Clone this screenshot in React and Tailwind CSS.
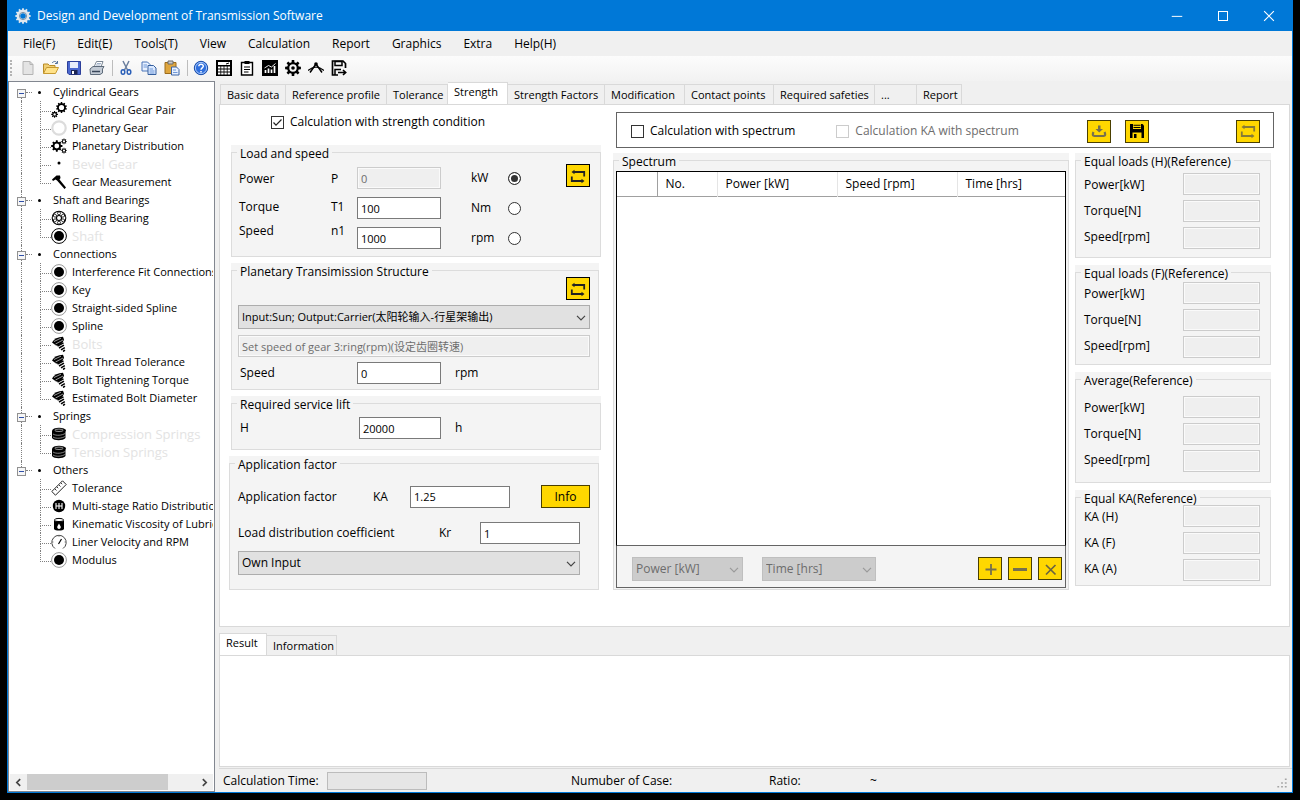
import React from "react";

/* ---------- drawing helpers ---------- */

function gearPath(cx, cy, outer, inner, hole, teeth) {
  const step = (Math.PI * 2) / teeth;
  const at = (r, a) => `${(cx + r * Math.cos(a)).toFixed(2)} ${(cy + r * Math.sin(a)).toFixed(2)}`;
  const pts = [];
  for (let i = 0; i < teeth; i++) {
    const a = i * step - Math.PI / 2;
    pts.push(at(inner, a - step * 0.3), at(outer, a - step * 0.2), at(outer, a + step * 0.2), at(inner, a + step * 0.3));
  }
  return `M${pts.join("L")}ZM${cx + hole} ${cy}A${hole} ${hole} 0 1 0 ${cx - hole} ${cy}A${hole} ${hole} 0 1 0 ${cx + hole} ${cy}Z`;
}

function Svg({ children, className = "size-4" }) {
  return (
    <svg viewBox="0 0 16 16" className={`${className} shrink-0`} fill="none" aria-hidden="true">
      {children}
    </svg>
  );
}

function Gear({ g, fill = "#000" }) {
  return <path d={gearPath(...g)} fill={fill} fillRule="evenodd" />;
}

const Disc = ({ ring = "#999" }) => (
  <Svg>
    <circle cx="8" cy="8" r="7.4" stroke={ring} strokeWidth="1" />
    <circle cx="8" cy="8" r="5" fill="#000" />
  </Svg>
);

const Bolt = () => (
  <Svg>
    <path d="M1 6.500C3 3 7 1 12 .8L13 3.500C12 7 9 9.500 5 9.500Z" fill="#000" />
    <path d="M3 5.500L10 2.200M4.500 8L12 4" stroke="#fff" strokeWidth=".6" />
    <path d="M6.500 10L12.500 6.800M8 12L13 9.200M10 13.800L13.800 11.600M12 15.500L14 14.200" stroke="#000" strokeWidth="1.500" />
  </Svg>
);

const Spring = () => (
  <Svg>
    <path d="M1 5V12C3 15 12 15 14.500 12V3.500Z" fill="#000" />
    <ellipse cx="8" cy="4.500" rx="6.800" ry="2.800" fill="#000" />
    <ellipse cx="8" cy="4.300" rx="4.200" ry="1.200" stroke="#bbb" strokeWidth=".8" />
    <path d="M2 8C5 10 11 9.500 14.500 7.300M2 11C5 13 11 12.500 14.500 10.200" stroke="#bbb" strokeWidth=".7" />
  </Svg>
);

const icons = {
  pair: (
    <Svg>
      <Gear g={[10.5, 5.5, 5.5, 4.4, 2.6, 10]} />
      <Gear g={[3.6, 12.4, 3.4, 2.4, 1.2, 8]} />
    </Svg>
  ),
  ring: (
    <Svg>
      <circle cx="8" cy="8" r="6.700" stroke="#dcdcdc" strokeWidth="2.200" />
    </Svg>
  ),
  planets: (
    <Svg>
      <Gear g={[5.8, 8, 5.7, 4.3, 2.4, 8]} />
      <Gear g={[13, 3.4, 2.9, 2, 1.1, 8]} />
      <Gear g={[13, 12.6, 2.9, 2, 1.1, 8]} />
    </Svg>
  ),
  dot: (
    <Svg>
      <circle cx="8" cy="7" r="1.500" fill="#000" />
    </Svg>
  ),
  caliper: (
    <Svg>
      <path d="M1 5.500L5.500 1.500L9 1.500L9.500 4L8.500 5.500L15 13.500L13.500 15L6 6.500L4.500 5.500L2 7Z" fill="#000" />
    </Svg>
  ),
  bearing: (
    <Svg>
      <circle cx="8" cy="8" r="6.800" stroke="#000" strokeWidth="1.100" />
      <circle cx="8" cy="8" r="2.500" stroke="#000" strokeWidth="1.100" />
      {[0, 60, 120, 180, 240, 300].map((a) => (
        <circle key={a} cx="8" cy="3.300" r="1.500" stroke="#000" strokeWidth=".8" transform={`rotate(${a} 8 8)`} />
      ))}
    </Svg>
  ),
  shaft: <Disc ring="#000" />,
  disc: <Disc />,
  bolt: <Bolt />,
  spring: <Spring />,
  ruler: (
    <Svg>
      <path d="M.8 11.500L11.500 .8L15.200 4.500L4.500 15.200Z" stroke="#222" strokeWidth="1" />
      <path d="M4 9L5.500 10.500M6 7L7.200 8.200M8 5L9.500 6.500M10 3L11.200 4.200" stroke="#222" strokeWidth=".9" />
    </Svg>
  ),
  ratio: (
    <Svg>
      <circle cx="8" cy="8" r="6.200" fill="#000" />
      <path d="M5 5V11M8 5V11M11 5V11M5 8H11" stroke="#fff" strokeWidth="1.100" />
    </Svg>
  ),
  oil: (
    <Svg>
      <path d="M3 4.500V13C4 15 12 15 13 13V4.500Z" fill="#000" />
      <ellipse cx="8" cy="4" rx="4.600" ry="1.600" fill="#fff" stroke="#000" strokeWidth="1" />
      <path d="M8 7.500L9.700 10.500A1.800 1.800 0 1 1 6.300 10.500Z" fill="#fff" />
    </Svg>
  ),
  gauge: (
    <Svg>
      <path d="M4 14.500A7.200 7.200 0 1 1 12 14.500" stroke="#444" strokeWidth="1" />
      <path d="M7.500 10L10.500 5" stroke="#000" strokeWidth="1.200" />
      <path d="M8 1V3M1 8H2.500M13.500 8H15" stroke="#777" strokeWidth=".8" />
    </Svg>
  ),
};

/* ---------- data ---------- */

const menus = ["File(F)", "Edit(E)", "Tools(T)", "View", "Calculation", "Report", "Graphics", "Extra", "Help(H)"];

const tree = [
  ["Cylindrical Gears", [
    ["Cylindrical Gear Pair", "pair"],
    ["Planetary Gear", "ring"],
    ["Planetary Distribution", "planets"],
    ["Bevel Gear", "dot", true],
    ["Gear Measurement", "caliper"],
  ]],
  ["Shaft and Bearings", [
    ["Rolling Bearing", "bearing"],
    ["Shaft", "shaft", true],
  ]],
  ["Connections", [
    ["Interference Fit Connections", "disc"],
    ["Key", "disc"],
    ["Straight-sided Spline", "disc"],
    ["Spline", "disc"],
    ["Bolts", "bolt", true],
    ["Bolt Thread Tolerance", "bolt"],
    ["Bolt Tightening Torque", "bolt"],
    ["Estimated Bolt Diameter", "bolt"],
  ]],
  ["Springs", [
    ["Compression Springs", "spring", true],
    ["Tension Springs", "spring", true],
  ]],
  ["Others", [
    ["Tolerance", "ruler"],
    ["Multi-stage Ratio Distribution", "ratio"],
    ["Kinematic Viscosity of Lubricants", "oil"],
    ["Liner Velocity and RPM", "gauge"],
    ["Modulus", "disc"],
  ]],
];

const tabs = [
  ["Basic data", "w-[66px]"],
  ["Reference profile", "w-[101px]"],
  ["Tolerance", "w-[61px]"],
  ["Strength", "w-[60px]"],
  ["Strength Factors", "w-[97px]"],
  ["Modification", "w-[80px]"],
  ["Contact points", "w-[89px]"],
  ["Required safeties", "w-[101px]"],
  ["...", "w-[42px]"],
  ["Report", "w-[45px]"],
];

/* ---------- toolbar ---------- */

const toolbar = [
  ["New", <Svg><path d="M3 1.500H10L13 4.500V14.500H3Z" fill="#e4e4e4" stroke="#b4b4b4" /><path d="M10 1.500V4.500H13" stroke="#b4b4b4" /></Svg>],
  ["Open", <Svg><path d="M.5 13.500V4H5L6.500 5.500H12V8" fill="#f0cf75" stroke="#b98c28" /><path d="M.5 13.500L3.500 7.500H15.500L12.500 13.500Z" fill="#ffe28a" stroke="#c79a32" /><path d="M9 3C11 .8 13 1 14 3M14.500 1V3.500H12" stroke="#53719c" /></Svg>],
  ["Save", <Svg><path d="M1.500 1.500H14.500V14.500H3L1.500 13Z" fill="#4b68cf" stroke="#2c3f9a" /><path d="M4 2H12V8H4Z" fill="#e9eefb" /><path d="M5 10H11.500V14.500H5Z" fill="#1b2452" /><path d="M6 11H8V14H6Z" fill="#fff" /></Svg>],
  ["Print", <Svg><path d="M5 7L7.500 1.500H14L12 7" fill="#fff" stroke="#7b8794" /><path d="M1 9L4 6.500H15L13.500 9V13L11 14.500H1.500Z" fill="#c3cbd5" stroke="#5e6b7a" /><path d="M3 11.500H11" stroke="#39465a" strokeWidth="1.500" /><path d="M8 3.500H12M7 5H11.500" stroke="#9fb0c8" /></Svg>],
  null,
  ["Cut", <Svg><path d="M5 1L9.500 10M11 1L6.500 10" stroke="#6b7f9e" strokeWidth="1.500" /><ellipse cx="5" cy="12" rx="1.800" ry="2.300" stroke="#2a5fb8" strokeWidth="1.500" /><ellipse cx="11" cy="12" rx="1.800" ry="2.300" stroke="#2a5fb8" strokeWidth="1.500" /></Svg>],
  ["Copy", <Svg><path d="M1 2H6.500L9 4.500V11H1Z" fill="#e8f1ff" stroke="#4a74b8" /><path d="M7 5.500H12.500L15 8V14.500H7Z" fill="#dbe9ff" stroke="#345f9f" /><path d="M2.500 5H6M2.500 7H6M8.500 9H12M8.500 11H13.500M8.500 13H13.500" stroke="#6f98d8" /></Svg>],
  ["Paste", <Svg><path d="M1 2.500H12V13.500H1Z" fill="#dfa63e" stroke="#9c6c1c" /><path d="M4 1H9V4H4Z" fill="#ccc" stroke="#6b6b6b" /><path d="M7.500 7H12.500L15 9.500V15H7.500Z" fill="#e7f0ff" stroke="#3c64a4" /><path d="M9 10H12M9 12.500H13.500" stroke="#6f98d8" /></Svg>],
  null,
  ["Help", <Svg><circle cx="8" cy="8" r="6.700" fill="#2f6fdd" stroke="#1b4ea8" /><circle cx="8" cy="8" r="5.600" stroke="#c5dcff" strokeWidth=".8" /><path d="M5.800 6.300C5.800 3.500 10.400 3.600 10.300 6.300C10.200 7.900 8 7.900 8 9.800M8 11V12.500" stroke="#fff" strokeWidth="1.500" /></Svg>],
  ["Calculator", <Svg><path d="M0 0H16V16H0Z" fill="#000" /><path d="M2 2H14V5H2Z" fill="#fff" /><path d="M10 4L13 3" stroke="#000" /><path d="M2 7.500H14M2 10.500H14M2 13.500H14" stroke="#fff" strokeWidth="1.800" strokeDasharray="2.400 .8" /></Svg>],
  ["Report", <Svg><path d="M2.500 2.500H13.500V15H2.500Z" fill="#fff" stroke="#000" strokeWidth="1.400" /><path d="M5.500 1H10.500V4H5.500Z" fill="#000" /><path d="M5 7H11M5 9.500H11M5 12H9.500" stroke="#000" strokeWidth="1.200" /></Svg>],
  ["Chart", <Svg><path d="M0 0H16V16H0Z" fill="#000" /><path d="M3.500 10V13M6.500 8.500V13M9.500 9.500V13M12.500 6V13" stroke="#fff" strokeWidth="1.700" /><path d="M2.500 8L6.500 5.500L9.500 7L13.500 3.500" stroke="#fff" strokeWidth=".9" /></Svg>],
  ["Settings", <Svg><Gear g={[8, 8, 8, 5.9, 3.7, 8]} /><circle cx="8" cy="8" r="1.800" fill="#000" /></Svg>],
  ["Measure", <Svg><path d="M8 4L2 12.500M8 4L14 12.500" stroke="#000" strokeWidth="1.500" /><path d="M0 10.500L4 8L8 7L12 8L16 10.500" stroke="#000" strokeWidth="1.100" /><circle cx="8" cy="4" r="1.800" fill="#000" /></Svg>],
  ["Export", <Svg><path d="M7 15H1.500V1H12L14.500 3.500V8" stroke="#000" strokeWidth="1.700" /><path d="M4 1.500H11V5.500H4Z" stroke="#000" strokeWidth="1.500" /><path d="M4 15V9.500H10" stroke="#000" strokeWidth="1.500" /><path d="M7 12.500H14.500M12 10L14.700 12.500L12 15" stroke="#000" strokeWidth="1.600" /></Svg>],
];

/* ---------- controls ---------- */

const textBox =
  "h-[22px] min-w-0 border border-[#7a7a7a] bg-white px-[3px] text-[11px] text-black outline-none disabled:border-[#cccccc] disabled:bg-[#efefef] disabled:text-[#6d6d6d] disabled:shadow-[inset_0_0_0_1px_#fafafa]";

function IconButton({ label, children, dim }) {
  return (
    <button
      type="button"
      aria-label={label}
      className={`flex h-[23px] w-6 shrink-0 items-center justify-center border bg-[#ffd700] ${dim ? "border-[#4a3f00]" : "border-black"}`}
    >
      {children}
    </button>
  );
}

const Swap = ({ color = "#222" }) => (
  <Svg>
    <path d="M3 4H14.200V8.500M1.800 8.500V13H13" stroke={color} strokeWidth="1.800" />
    <path d="M1.500 4L4.500 1.800V6.200ZM14.500 13L11.500 10.800V15.200Z" fill={color} />
  </Svg>
);

function Select({ label, value, className = "", size = "text-[12px]", disabled }) {
  return (
    <div className={`relative ${className}`}>
      <select
        aria-label={label}
        disabled={disabled}
        className={`h-6 w-full appearance-none border border-[#adadad] bg-[#e1e1e1] pr-5 pl-[3px] text-black outline-none disabled:border-[#bfbfbf] disabled:bg-[#cccccc] disabled:text-[#6d6d6d] disabled:opacity-100 ${size}`}
      >
        <option>{value}</option>
      </select>
      <svg viewBox="0 0 10 6" className="pointer-events-none absolute top-[10px] right-1 h-[6px] w-[10px]" fill="none" aria-hidden="true">
        <path d="M1 .8L5 4.800L9 .8" stroke={disabled ? "#9a9a9a" : "#444"} strokeWidth="1.200" />
      </svg>
    </div>
  );
}

function Check({ label, checked, disabled }) {
  return (
    <label className={`flex items-center gap-[6px] ${disabled ? "text-[#6d6d6d]" : ""}`}>
      <span className="relative flex">
        <input
          type="checkbox"
          defaultChecked={checked}
          disabled={disabled}
          className="size-[13px] appearance-none border border-[#333] bg-white disabled:border-[#cccccc]"
        />
        {checked && (
          <svg viewBox="0 0 13 13" className="pointer-events-none absolute inset-0 size-[13px]" fill="none" aria-hidden="true">
            <path d="M2.500 6.500L5 9.200L10.500 3.500" stroke="#222" strokeWidth="1.200" />
          </svg>
        )}
      </span>
      {label}
    </label>
  );
}

function Group({ title, className = "", children }) {
  return (
    <div className={`flex bg-[#f4f4f4] ${className}`}>
      <fieldset className="w-full min-w-0 border border-[#dcdcdc]">
        <legend className="ml-[5px] h-[14px] px-[3px] leading-[18px] whitespace-nowrap">{title}</legend>
        {children}
      </fieldset>
    </div>
  );
}

function ReadoutGroup({ title, fields, className, pad }) {
  const ids = fields.map((f) => `${title}-${f}`.replace(/[^a-zA-Z]+/g, "-"));
  return (
    <Group title={title} className={className}>
      <div className={`flex justify-between pr-[10px] pl-2 ${pad}`}>
        <div className="flex flex-col">
          {fields.map((f, i) => (
            <label key={f} htmlFor={ids[i]} className="h-[26px] leading-[24px]">
              {f}
            </label>
          ))}
        </div>
        <div className="flex flex-col gap-[5px]">
          {ids.map((id) => (
            <input key={id} id={id} disabled className={`${textBox} w-[77px]`} />
          ))}
        </div>
      </div>
    </Group>
  );
}

/* ---------- regions ---------- */

function TitleBar() {
  return (
    <header className="flex h-[31px] shrink-0 items-center bg-[#0078d7] pl-[7px] text-white">
      <Svg>
        <Gear g={[8, 8, 7.8, 6.4, 2.8, 12]} fill="#dfe7ee" />
        <circle cx="8" cy="8" r="3.600" stroke="#7d93a6" strokeWidth="1" />
      </Svg>
      <h1 className="ml-[6px] flex-1 text-[12px]">Design and Development of Transmission Software</h1>
      <button type="button" aria-label="Minimize" className="flex h-full w-[46px] items-center justify-center">
        <Svg className="h-3 w-3"><path d="M1 8.500H15" stroke="#fff" strokeWidth="1.300" /></Svg>
      </button>
      <button type="button" aria-label="Maximize" className="flex h-full w-[46px] items-center justify-center">
        <span className="size-[10px] border border-white" />
      </button>
      <button type="button" aria-label="Close" className="flex h-full w-[46px] items-center justify-center">
        <Svg className="h-3 w-3"><path d="M1.500 1.500L14.500 14.500M14.500 1.500L1.500 14.500" stroke="#fff" strokeWidth="1.500" /></Svg>
      </button>
    </header>
  );
}

function TreeView() {
  return (
    <aside className="flex w-[207px] shrink-0 flex-col border border-[#828790] bg-white">
      <ul className="mr-px flex-1 overflow-hidden pt-px text-[11px] leading-[18px] whitespace-nowrap">
        {tree.map(([name, items], gi) => {
          const lastGroup = gi === tree.length - 1;
          return (
            <li key={name}>
              <div className="flex h-[18px] items-center pl-2">
                <span className="flex h-full w-[9px] flex-col items-center">
                  <span className={`h-[6px] border-l border-dotted ${gi ? "border-[#808080]" : "border-transparent"}`} />
                  <button type="button" aria-label={`Collapse ${name}`} className="flex size-[9px] shrink-0 items-center justify-center border border-[#919191] bg-[#f6f6f6]">
                    <span className="h-px w-[5px] bg-[#2f4fa8]" />
                  </button>
                  <span className={`h-[3px] border-l border-dotted ${lastGroup ? "border-transparent" : "border-[#808080]"}`} />
                </span>
                <span className="w-[6px] border-t border-dotted border-[#808080]" />
                <span className="ml-[6px] size-[3px] rounded-full bg-black" />
                <span className="ml-3">{name}</span>
              </div>
              <ul>
                {items.map(([label, icon, off], i) => (
                  <li key={label} className="flex h-[18px] pl-3">
                    <span className={`w-[19px] shrink-0 border-l border-dotted ${lastGroup ? "border-transparent" : "border-[#808080]"}`} />
                    <span className="w-[11px] shrink-0">
                      <span className="block h-[11px] border-b border-l border-dotted border-[#808080]" />
                      {i < items.length - 1 && <span className="block h-[7px] border-l border-dotted border-[#808080]" />}
                    </span>
                    <span className="flex items-center">{icons[icon]}</span>
                    <span className={`ml-[5px] ${off ? "text-[13px] text-[#e3e3e3]" : ""}`}>{label}</span>
                  </li>
                ))}
              </ul>
            </li>
          );
        })}
      </ul>
      <div className="m-px flex h-4 bg-[#f0f0f0]">
        <button type="button" aria-label="Scroll left" className="flex w-[17px] items-center justify-center">
          <Svg className="size-[9px]"><path d="M11 2L5 8L11 14" stroke="#444" strokeWidth="3" /></Svg>
        </button>
        <div className="flex-1">
          <div className="h-full w-5/6 bg-[#cdcdcd]" />
        </div>
        <button type="button" aria-label="Scroll right" className="flex w-[17px] items-center justify-center">
          <Svg className="size-[9px]"><path d="M5 2L11 8L5 14" stroke="#444" strokeWidth="3" /></Svg>
        </button>
      </div>
    </aside>
  );
}

function TabStrip({ items, active, className }) {
  return (
    <div role="tablist" className={`flex items-end text-[11px] ${className}`}>
      {items.map(([name, width], i) => (
        <button
          key={name}
          type="button"
          role="tab"
          aria-selected={i === active}
          className={`${width} shrink-0 border-t border-r border-[#d9d9d9] pl-[6px] text-left leading-[18px] whitespace-nowrap ${
            i === active ? "-mb-px h-[23px] bg-white pb-1 first:border-l" : "h-5 bg-[#f0f0f0] first:border-l"
          }`}
        >
          {name}
        </button>
      ))}
    </div>
  );
}

function LoadAndSpeed() {
  return (
    <Group title="Load and speed" className="h-[112px]">
      <div className="flex pr-[10px] pl-[7px]">
        <div className="flex w-[92px] flex-col pt-[6px]">
          <label htmlFor="power" className="h-7 leading-7">Power</label>
          <label htmlFor="torque" className="h-7 leading-7">Torque</label>
          <label htmlFor="speed" className="h-5 leading-5">Speed</label>
        </div>
        <div className="flex w-[26px] flex-col pt-[6px]">
          <span className="h-7 leading-7">P</span>
          <span className="h-7 leading-7">T1</span>
          <span className="h-5 leading-5">n1</span>
        </div>
        <div className="flex flex-col gap-2 pt-2">
          <input id="power" defaultValue="0" disabled className={`${textBox} w-[84px]`} />
          <input id="torque" defaultValue="100" className={`${textBox} w-[84px]`} />
          <input id="speed" defaultValue="1000" className={`${textBox} w-[84px]`} />
        </div>
        <div className="ml-[30px] flex w-[37px] flex-col gap-2 pt-2 leading-[22px]">
          <label htmlFor="by-kw">kW</label>
          <label htmlFor="by-nm">Nm</label>
          <label htmlFor="by-rpm">rpm</label>
        </div>
        <div className="flex flex-1 flex-col gap-[17px] pt-[13px]">
          {["by-kw", "by-nm", "by-rpm"].map((id, i) => (
            <input
              key={id}
              id={id}
              type="radio"
              name="load-basis"
              defaultChecked={i === 0}
              className="size-[13px] appearance-none rounded-full border border-[#333] bg-white checked:bg-[#333] checked:shadow-[inset_0_0_0_2px_white]"
            />
          ))}
        </div>
        <div className="pt-[5px]">
          <IconButton label="Recalculate load"><Swap /></IconButton>
        </div>
      </div>
    </Group>
  );
}

function LeftColumn() {
  return (
    <div className="flex w-[370px] shrink-0 flex-col gap-[6px]">
      <div className="flex h-[34px] items-center pl-10">
        <Check label="Calculation with strength condition" checked />
      </div>
      <LoadAndSpeed />
      <Group title="Planetary Transimission Structure" className="mr-[2px] h-[127px]">
        <div className="flex flex-col pr-2 pl-[6px]">
          <div className="flex justify-end pb-[5px]">
            <IconButton label="Recalculate structure"><Swap /></IconButton>
          </div>
          <Select label="Structure" size="text-[11px]" value="Input:Sun; Output:Carrier(太阳轮输入-行星架输出)" />
          <input aria-label="Speed note" disabled defaultValue="Set speed of gear 3:ring(rpm)(设定齿圈转速)" className={`${textBox} mt-[6px]`} />
          <div className="mt-[5px] flex items-center">
            <label htmlFor="ring-speed" className="w-[119px] pl-[2px]">Speed</label>
            <input id="ring-speed" defaultValue="0" className={`${textBox} w-[84px]`} />
            <span className="ml-[14px]">rpm</span>
          </div>
        </div>
      </Group>
      <Group title="Required service lift" className="h-[54px]">
        <div className="flex items-center pt-[7px] pl-2">
          <label htmlFor="life" className="w-[119px]">H</label>
          <input id="life" defaultValue="20000" className={`${textBox} w-[82px]`} />
          <span className="ml-[14px]">h</span>
        </div>
      </Group>
      <Group title="Application factor" className="mr-[2px] -ml-[2px] h-[134px]">
        <div className="flex flex-col pr-2 pl-2">
          <div className="flex items-center pt-[15px]">
            <label htmlFor="ka" className="w-[135px]">Application factor</label>
            <span className="w-[37px]">KA</span>
            <input id="ka" defaultValue="1.25" className={`${textBox} w-[100px]`} />
            <button type="button" className="ml-auto h-[23px] w-[49px] border border-[#4a3f00] bg-[#ffd700]">Info</button>
          </div>
          <div className="flex items-center pt-[14px] pr-[10px]">
            <label htmlFor="kr" className="flex-1">Load distribution coefficient</label>
            <span className="w-[41px]">Kr</span>
            <input id="kr" defaultValue="1" className={`${textBox} w-[100px]`} />
          </div>
          <Select label="Input mode" value="Own Input" className="mt-[7px] mr-[10px]" />
        </div>
      </Group>
    </div>
  );
}

function Spectrum() {
  return (
    <Group title="Spectrum" className="h-[437px] flex-1">
      <div className="mx-[2px] mt-1 border border-[#646464]">
        <div className="-mx-px -mt-px h-[375px] border border-b-[#646464] border-black bg-white">
          <table className="w-full table-fixed border-collapse text-left">
            <thead>
              <tr className="h-6 border-b border-[#a0a0a0]">
                <th className="w-10 border-r border-[#a0a0a0] p-0" aria-label="Row" />
                <th className="w-[60px] border-r border-[#e5e5e5] py-0 pr-0 pl-2 font-normal">No.</th>
                <th className="w-[120px] border-r border-[#e5e5e5] py-0 pr-0 pl-2 font-normal">Power [kW]</th>
                <th className="w-[120px] border-r border-[#e5e5e5] py-0 pr-0 pl-2 font-normal">Speed [rpm]</th>
                <th className="py-0 pr-0 pl-2 font-normal">Time [hrs]</th>
              </tr>
            </thead>
            <tbody />
          </table>
        </div>
        <div className="flex h-[41px] items-center pt-1 pr-[3px] pl-[15px]">
          <Select label="Load quantity" value="Power [kW]" disabled className="w-[111px]" />
          <Select label="Duration quantity" value="Time [hrs]" disabled className="ml-[19px] w-[114px]" />
          <div className="ml-auto flex gap-[6px]">
            <IconButton label="Add row" dim><Svg><path d="M9 3V14M3.500 8.500H14.500" stroke="#76704f" strokeWidth="1.800" /></Svg></IconButton>
            <IconButton label="Remove row" dim><Svg><path d="M1 8.500H15" stroke="#76704f" strokeWidth="3" /></Svg></IconButton>
            <IconButton label="Clear rows" dim><Svg><path d="M4 4L13.500 13.500M13.500 4L4 13.500" stroke="#6b6440" strokeWidth="1.700" /></Svg></IconButton>
          </div>
        </div>
      </div>
    </Group>
  );
}

function RightColumn() {
  const load = ["Power[kW]", "Torque[N]", "Speed[rpm]"];
  return (
    <div className="flex min-w-0 flex-1 flex-col gap-[5px] pt-[7px]">
      <div className="ml-[3px] flex h-9 items-center border border-[#646464] pt-[2px] pr-[13px] pl-[14px]">
        <Check label="Calculation with spectrum" />
        <div className="ml-[41px] flex-1">
          <Check label="Calculation KA with spectrum" disabled />
        </div>
        <IconButton label="Import spectrum" dim>
          <Svg><path d="M7 2.500H9.500V6H12L8.200 9.500L4.500 6H7Z" fill="#76704f" /><path d="M2.500 9C.5 13.500 3 13 8 13C13 13 15.500 13.500 13.500 9" stroke="#76704f" strokeWidth="2.200" /></Svg>
        </IconButton>
        <div className="mr-[87px] ml-[14px]">
          <IconButton label="Save spectrum" dim>
            <Svg><path d="M1 1H13.500L15 2.500V15H1Z" fill="#000" /><path d="M4 1H12V6H4Z" fill="#ffd700" /><path d="M4.500 2.200H11.500M4.500 4.500H11.500" stroke="#000" strokeWidth="1.100" /><path d="M3.500 9.500H12.500V15H3.500Z" fill="#ffd700" /><path d="M5 11H7.500V15H5Z" fill="#000" /></Svg>
          </IconButton>
        </div>
        <IconButton label="Convert spectrum" dim><Swap color="#857b38" /></IconButton>
      </div>
      <div className="mr-[3px] flex gap-[6px]">
        <Spectrum />
        <div className="flex w-[196px] shrink-0 flex-col gap-[7px]">
          <ReadoutGroup title="Equal loads (H)(Reference)" fields={load} className="h-[105px]" pad="pt-[6px]" />
          <ReadoutGroup title="Equal loads (F)(Reference)" fields={load} className="h-[100px]" pad="pt-[3px]" />
          <ReadoutGroup title="Average(Reference)" fields={load} className="h-[111px]" pad="pt-[10px]" />
          <ReadoutGroup title="Equal KA(Reference)" fields={["KA (H)", "KA (F)", "KA (A)"]} className="h-[96px]" pad="pt-px" />
        </div>
      </div>
    </div>
  );
}

export default function App() {
  return (
    <div className="flex min-h-screen bg-black px-[7px] pb-[7px] font-['Open_Sans','Noto_Sans_CJK_SC',sans-serif] text-[12px] leading-[18px] text-black">
      <div className="flex min-w-0 flex-1 flex-col border border-t-0 border-[#0078d7] bg-[#f0f0f0]">
        <TitleBar />
        <nav className="flex h-[25px] shrink-0 items-center gap-[22px] pl-[15px] text-[12px]">
          {menus.map((m) => (
            <button key={m} type="button">{m}</button>
          ))}
        </nav>
        <div role="toolbar" aria-label="Main" className="flex h-[25px] shrink-0 items-center bg-linear-to-b from-[#fcfcfc] to-[#f2f2f2] pb-[2px] pl-[2px]">
          <span className="mr-1 h-4 border-l-2 border-dotted border-[#b4b4b4]" />
          {toolbar.map((t, i) =>
            t ? (
              <button key={t[0]} type="button" aria-label={t[0]} className="flex h-[22px] w-[23px] items-center justify-center">{t[1]}</button>
            ) : (
              <span key={i} className="mr-[1px] ml-1 h-4 w-px bg-[#bdbdbd]" />
            )
          )}
        </div>
        <div className="flex min-h-0 flex-1">
          <TreeView />
          <div className="ml-1 flex min-w-0 flex-1 flex-col">
            <main className="mr-[2px] flex flex-1 flex-col">
              <TabStrip items={tabs} active={3} className="h-[23px] pl-px" />
              <section className="flex gap-3 border border-[#d9d9d9] bg-white pr-[15px] pb-9 pl-[11px]">
                <LeftColumn />
                <RightColumn />
              </section>
              <TabStrip items={[["Result", "w-[48px]"], ["Information", "w-[70px]"]]} active={0} className="h-[28px]" />
              <section className="flex-1 border border-[#d9d9d9] bg-white" aria-label="Result" />
            </main>
            <footer className="mt-px flex h-6 items-center border-t border-[#d9d9d9] pl-1">
              <span className="w-[104px]">Calculation Time:</span>
              <span className="h-[18px] w-[100px] border border-[#bcbcbc] bg-[#e6e6e6]" />
              <span className="ml-36 w-[198px]">Numuber of Case:</span>
              <span className="w-[101px]">Ratio:</span>
              <span className="flex-1">~</span>
              <Svg className="mt-1 mr-1 size-3">
                <path d="M13 2V4M13 7V9M13 12V14M8 7V9M8 12V14M3 12V14" stroke="#a5a5a5" strokeWidth="2.400" />
              </Svg>
            </footer>
          </div>
        </div>
      </div>
    </div>
  );
}
